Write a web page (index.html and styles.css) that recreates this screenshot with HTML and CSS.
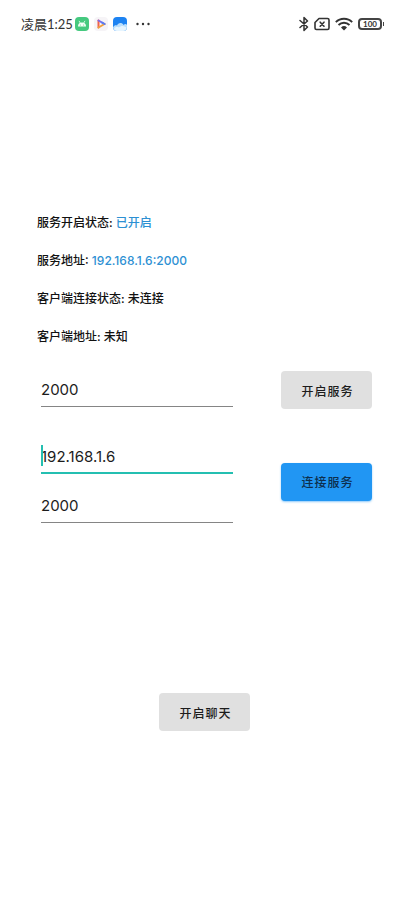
FILE: index.html
```html
<!DOCTYPE html>
<html lang="zh-CN">
<head>
<meta charset="utf-8">
<meta name="viewport" content="width=device-width, initial-scale=1">
<title>服务</title>
<link rel="stylesheet" href="styles.css">
</head>
<body>
<header class="statusbar">
  <div class="statusbar-left">
    <span class="clock">凌晨1:25</span>
    <div class="app-icons">
      <svg class="app-icon" viewBox="0 0 14 14" aria-hidden="true">
        <rect width="14" height="14" rx="4" fill="#45c97f"/>
        <path d="M3 9.500a4 4 0 0 1 8 0z" fill="#f3fff7"/>
        <path d="M4.200 4.200l1.200 2M9.800 4.200l-1.200 2" stroke="#f3fff7" stroke-width=".8" stroke-linecap="round"/>
        <circle cx="5.300" cy="8" r=".5" fill="#45c97f"/><circle cx="8.700" cy="8" r=".5" fill="#45c97f"/>
      </svg>
      <svg class="app-icon" viewBox="0 0 14 14" aria-hidden="true">
        <rect width="14" height="14" rx="4" fill="#f6f4f7"/>
        <path d="M4.500 3.500v7" stroke="#f0644f" stroke-width="2" stroke-linecap="round"/>
        <path d="M4.500 3.500L10.500 7" stroke="#7d6bea" stroke-width="2" stroke-linecap="round"/>
        <path d="M10.500 7l-6 3.500" stroke="#f0a03e" stroke-width="2" stroke-linecap="round"/>
        <path d="M8 5.500L10.500 7" stroke="#5b7df0" stroke-width="2" stroke-linecap="round"/>
      </svg>
      <svg class="app-icon" viewBox="0 0 14 14" aria-hidden="true">
        <rect width="14" height="14" rx="4" fill="#1d83f2"/>
        <path d="M0 10.500C1 8 3 8 4 8.500C5 5.500 9 5 10.500 8C12 6.500 13.500 7 14 8v2a4 4 0 0 1-4 4H4a4 4 0 0 1-4-3.500z" fill="#b9defc"/>
        <path d="M1 12c1-2 3-2.500 5-1.500c2-2 5-2 7.500 0a4 4 0 0 1-3.500 3.500H4a4 4 0 0 1-3-2z" fill="#e6f5ff"/>
      </svg>
      <svg class="more" viewBox="0 0 14 4" aria-hidden="true" fill="#333">
        <circle cx="1.500" cy="2" r="1.200"/><circle cx="7" cy="2" r="1.200"/><circle cx="12.500" cy="2" r="1.200"/>
      </svg>
    </div>
  </div>
  <div class="statusbar-right">
    <svg width="10" height="16" viewBox="0 0 10 16" fill="none" stroke="#333" stroke-width="1.500" stroke-linejoin="round" stroke-linecap="round" aria-hidden="true">
      <path d="M1 4.500l7.500 6.500L5 14.500v-13L8.500 5L1 11.500"/>
    </svg>
    <svg width="16" height="14" viewBox="0 0 16 14" fill="none" stroke="#333" stroke-width="1.600" stroke-linejoin="round" stroke-linecap="round" aria-hidden="true">
      <path d="M5 1.500h8.500q1.500 0 1.500 1.500v8q0 1.500-1.500 1.500h-11Q1 12.500 1 11V5.500z"/>
      <path d="M6.200 5.200l3.800 4M10 5.200l-3.800 4"/>
    </svg>
    <svg width="18" height="14" viewBox="0 0 18 14" fill="none" stroke="#333" stroke-width="1.800" aria-hidden="true">
      <path d="M.8 5.200a11.500 11.500 0 0 1 16.400 0M3.500 8a7.800 7.800 0 0 1 11 0"/>
      <path d="M6 10.500a4.300 4.300 0 0 1 6 0L9 13.500z" fill="#333" stroke="none"/>
    </svg>
    <span class="battery">100</span>
  </div>
</header>
<main class="screen">
  <section class="status-list">
    <p>服务开启状态: <span class="value">已开启</span></p>
    <p>服务地址: <span class="value">192.168.1.6:2000</span></p>
    <p>客户端连接状态: 未连接</p>
    <p>客户端地址: 未知</p>
  </section>
  <form class="row">
    <input class="field" type="text" value="2000" aria-label="服务端口">
    <button class="btn" type="button">开启服务</button>
  </form>
  <form class="row">
    <div class="fields">
      <div class="focused">
        <input class="field field-active" type="text" value="192.168.1.6" aria-label="服务器地址">
      </div>
      <input class="field" type="text" value="2000" aria-label="服务器端口">
    </div>
    <button class="btn btn-primary" type="button">连接服务</button>
  </form>
  <div class="chat">
    <button class="btn" type="button">开启聊天</button>
  </div>
</main>
</body>
</html>
```
FILE: styles.css
```css
* {
  box-sizing: border-box;
}

body {
  margin: 0;
  min-height: 100vh;
  background: #fff;
  color: #111;
  font-family: Inter, "Noto Sans CJK SC", sans-serif;
}

.statusbar {
  display: flex;
  justify-content: space-between;
  align-items: center;
  height: 48px;
  padding: 0 26px 0 21px;
  color: #333;
  font-family: Lato, "Noto Sans CJK SC", sans-serif;
}

.statusbar-left {
  display: flex;
  align-items: center;
  gap: 2px;
}

.app-icons,
.statusbar-right {
  display: flex;
  align-items: center;
  gap: 5px;
}

.clock {
  font-size: 13px;
  line-height: 20px;
}

.app-icon {
  width: 14px;
  height: 14px;
}

.more {
  width: 14px;
  height: 4px;
  margin-left: 4px;
}

.battery {
  position: relative;
  width: 24px;
  height: 12px;
  border: 2px solid #444;
  border-radius: 4px;
  font-size: 8px;
  font-weight: 700;
  line-height: 8px;
  text-align: center;
}

.battery::after {
  content: "";
  position: absolute;
  top: 2px;
  right: -4px;
  width: 1px;
  height: 4px;
  background: #444;
}

.screen {
  padding: 165px 36px 0 37px;
}

.status-list {
  display: grid;
  gap: 18px;
  margin-bottom: 24px;
  font-size: 12px;
  font-weight: 500;
  line-height: 20px;
}

.status-list p {
  margin: 0;
}

.value {
  color: #2d90d3;
}

.row {
  display: grid;
  grid-template-columns: 1fr 91px;
  align-items: center;
  gap: 48px;
  margin: 0 0 31px;
  padding-left: 4px;
}

.fields {
  display: grid;
  gap: 15px;
}

.field {
  display: block;
  width: 100%;
  height: 34px;
  padding: 0;
  border: 0;
  border-bottom: 1px solid #858585;
  border-radius: 0;
  outline: 0;
  background: transparent;
  color: #1c1c1c;
  font: 15px Inter, "Noto Sans CJK SC", sans-serif;
}

.field-active {
  border-bottom: 2px solid #24bfb1;
}

.focused {
  position: relative;
}

.focused::before {
  content: "";
  position: absolute;
  top: 5px;
  left: 0;
  width: 2px;
  height: 21px;
  background: #24bfb1;
}

.btn {
  width: 91px;
  height: 38px;
  padding: 0 0 0 2px;
  border: 0;
  border-radius: 4px;
  background: #e0e0e0;
  color: #1c1c1c;
  font: 500 12px "Noto Sans CJK SC", sans-serif;
  letter-spacing: 1px;
}

.btn-primary {
  background: #2196f3;
  color: #0d2f4d;
  box-shadow: 0 1px 2px #2196f380;
}

.chat {
  display: flex;
  justify-content: center;
  padding-top: 139px;
}
```
